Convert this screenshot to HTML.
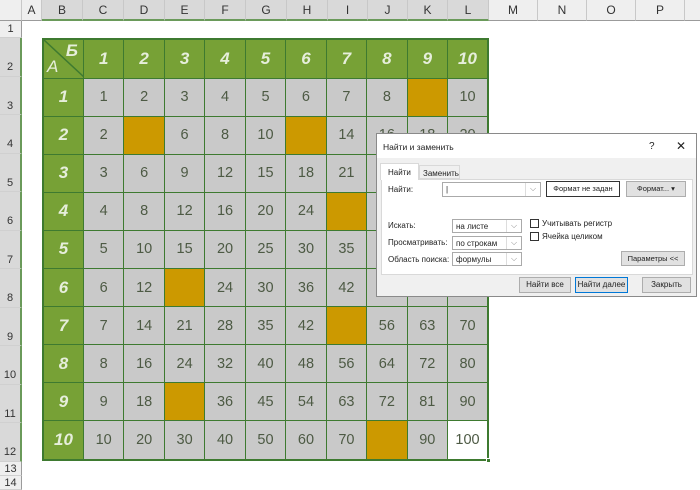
<!DOCTYPE html><html><head><meta charset="utf-8"><style>
*{margin:0;padding:0;box-sizing:border-box}
body{width:700px;height:488px;overflow:hidden;background:#fff;font-family:"Liberation Sans",Arial,sans-serif;position:relative}
.ch{position:absolute;top:0;height:21px;border-right:1px solid #c8c8c8;border-bottom:1px solid #9b9b9b;background:#efefef;font-size:12px;color:#333;text-align:center;line-height:21px}
.ch.s{background:#d9d9d9;border-bottom:2px solid #6a9a5a}
.rh{position:absolute;left:0;width:22px;border-bottom:1px solid #d0d0d0;border-right:1px solid #9b9b9b;background:#efefef;font-size:11px;color:#333;text-align:center}
.rh.s{background:#d9d9d9;border-right:2px solid #6a9a5a}
table{position:absolute;left:42px;top:38px;width:447px;height:423px;table-layout:fixed;border-collapse:collapse;border:2px solid #3e7a30}
td{border:1.5px solid #3e7a30;background:#c9c9c9;color:#4d5a44;font-size:14.5px;text-align:center;padding:0;overflow:hidden}
td.h{background:#77a136;color:#e6eedb;font-weight:bold;font-style:italic;font-size:17px}
td.o{background:#cc9900}
td.w{background:#fff}
.dlg{position:absolute;left:376px;top:133px;width:321px;height:164px;background:#f0f0f0;border:1px solid #8a8a8a;font-size:8px;color:#222}
.dlg div{position:absolute;white-space:nowrap}
.btn{background:#e1e1e1;border:1px solid #adadad;text-align:center;line-height:14px}
.cb{background:#fff;border:1px solid #aaa;padding-left:3px;line-height:13px}
.cb:after{content:"⌵";position:absolute;right:0;top:0;width:14px;height:100%;border-left:1px solid #ddd;text-align:center;color:#888;font-size:8px;line-height:11px}
</style></head><body>
<div class="ch" style="left:0;width:22px"></div>
<div class="ch" style="left:22px;width:20px">A</div>
<div class="ch s" style="left:42px;width:41px">B</div>
<div class="ch s" style="left:83px;width:41px">C</div>
<div class="ch s" style="left:124px;width:41px">D</div>
<div class="ch s" style="left:165px;width:40px">E</div>
<div class="ch s" style="left:205px;width:41px">F</div>
<div class="ch s" style="left:246px;width:41px">G</div>
<div class="ch s" style="left:287px;width:41px">H</div>
<div class="ch s" style="left:328px;width:40px">I</div>
<div class="ch s" style="left:368px;width:40px">J</div>
<div class="ch s" style="left:408px;width:40px">K</div>
<div class="ch s" style="left:448px;width:41px">L</div>
<div class="ch" style="left:489px;width:49px">M</div>
<div class="ch" style="left:538px;width:49px">N</div>
<div class="ch" style="left:587px;width:49px">O</div>
<div class="ch" style="left:636px;width:49px">P</div>
<div class="ch" style="left:685px;width:20px"></div>
<div class="rh" style="top:21px;height:17px;line-height:17px">1</div>
<div class="rh s" style="top:38px;height:38.5px;line-height:58px">2</div>
<div class="rh s" style="top:76.5px;height:38.5px;line-height:58px">3</div>
<div class="rh s" style="top:115px;height:38.5px;line-height:58px">4</div>
<div class="rh s" style="top:153.5px;height:38.5px;line-height:58px">5</div>
<div class="rh s" style="top:192px;height:38.5px;line-height:58px">6</div>
<div class="rh s" style="top:230.5px;height:38.5px;line-height:58px">7</div>
<div class="rh s" style="top:269px;height:38.5px;line-height:58px">8</div>
<div class="rh s" style="top:307.5px;height:38.5px;line-height:58px">9</div>
<div class="rh s" style="top:346px;height:38.5px;line-height:58px">10</div>
<div class="rh s" style="top:384.5px;height:38.5px;line-height:58px">11</div>
<div class="rh s" style="top:423px;height:38.5px;line-height:58px">12</div>
<div class="rh" style="top:461.5px;height:14px;line-height:14px">13</div>
<div class="rh" style="top:475.5px;height:14px;line-height:14px">14</div>
<table>
<tr><td class="h" style="position:relative"><svg width="41" height="38" style="position:absolute;left:0;top:0"><line x1="0" y1="0" x2="41" y2="38" stroke="#3e7a30" stroke-width="1.5"/></svg><span style="position:absolute;right:5px;top:1px">Б</span><span style="position:absolute;left:3px;bottom:1px;font-weight:normal">А</span></td><td class="h">1</td><td class="h">2</td><td class="h">3</td><td class="h">4</td><td class="h">5</td><td class="h">6</td><td class="h">7</td><td class="h">8</td><td class="h">9</td><td class="h">10</td></tr>
<tr><td class="h">1</td><td>1</td><td>2</td><td>3</td><td>4</td><td>5</td><td>6</td><td>7</td><td>8</td><td class="o"></td><td>10</td></tr>
<tr><td class="h">2</td><td>2</td><td class="o"></td><td>6</td><td>8</td><td>10</td><td class="o"></td><td>14</td><td>16</td><td>18</td><td>20</td></tr>
<tr><td class="h">3</td><td>3</td><td>6</td><td>9</td><td>12</td><td>15</td><td>18</td><td>21</td><td>24</td><td>27</td><td>30</td></tr>
<tr><td class="h">4</td><td>4</td><td>8</td><td>12</td><td>16</td><td>20</td><td>24</td><td class="o"></td><td>32</td><td>36</td><td>40</td></tr>
<tr><td class="h">5</td><td>5</td><td>10</td><td>15</td><td>20</td><td>25</td><td>30</td><td>35</td><td>40</td><td>45</td><td>50</td></tr>
<tr><td class="h">6</td><td>6</td><td>12</td><td class="o"></td><td>24</td><td>30</td><td>36</td><td>42</td><td>48</td><td>54</td><td>60</td></tr>
<tr><td class="h">7</td><td>7</td><td>14</td><td>21</td><td>28</td><td>35</td><td>42</td><td class="o"></td><td>56</td><td>63</td><td>70</td></tr>
<tr><td class="h">8</td><td>8</td><td>16</td><td>24</td><td>32</td><td>40</td><td>48</td><td>56</td><td>64</td><td>72</td><td>80</td></tr>
<tr><td class="h">9</td><td>9</td><td>18</td><td class="o"></td><td>36</td><td>45</td><td>54</td><td>63</td><td>72</td><td>81</td><td>90</td></tr>
<tr><td class="h">10</td><td>10</td><td>20</td><td>30</td><td>40</td><td>50</td><td>60</td><td>70</td><td class="o"></td><td>90</td><td class="w">100</td></tr>
</table>
<div class="dlg">
<div style="left:0;top:0;width:319px;height:24px;background:#fff"></div>
<div style="left:6px;top:8px;font-size:8.5px">Найти и заменить</div>
<div style="left:272px;top:7px;font-size:10px">?</div>
<div style="left:299px;top:5px;font-size:12px">✕</div>
<div style="left:4px;top:45px;width:312px;height:96px;background:#fff;border:1px solid #d9d9d9"></div>
<div style="left:3px;top:29px;width:39px;height:17px;background:#fff;border:1px solid #d9d9d9;border-bottom:none;padding:4px 0 0 7px">Найти</div>
<div style="left:42px;top:31px;width:41px;height:14px;background:#f0f0f0;border:1px solid #d9d9d9;padding:3px 0 0 3px">Заменить</div>
<div style="left:11px;top:51px">Найти:</div>
<div class="cb" style="left:65px;top:48px;width:99px;height:15px">|</div>
<div style="left:169px;top:47px;width:74px;height:16px;background:#fff;border:1px solid #333;text-align:center;line-height:14px;font-size:7.5px">Формат не задан</div>
<div class="btn" style="left:249px;top:47px;width:60px;height:16px;font-size:7.5px">Формат... ▾</div>
<div style="left:11px;top:87px">Искать:</div>
<div class="cb" style="left:75px;top:85px;width:70px;height:14px">на листе</div>
<div style="left:11px;top:104px">Просматривать:</div>
<div class="cb" style="left:75px;top:102px;width:70px;height:14px">по строкам</div>
<div style="left:11px;top:121px">Область поиска:</div>
<div class="cb" style="left:75px;top:118px;width:70px;height:14px">формулы</div>
<div style="left:153px;top:85px;width:9px;height:9px;border:1px solid #333;background:#fff"></div>
<div style="left:165px;top:85px">Учитывать регистр</div>
<div style="left:153px;top:98px;width:9px;height:9px;border:1px solid #333;background:#fff"></div>
<div style="left:165px;top:98px">Ячейка целиком</div>
<div class="btn" style="left:244px;top:117px;width:64px;height:15px;font-size:7.5px">Параметры &lt;&lt;</div>
<div class="btn" style="left:142px;top:143px;width:52px;height:16px">Найти все</div>
<div class="btn" style="left:198px;top:143px;width:53px;height:16px;border:1px solid #0078d7">Найти далее</div>
<div class="btn" style="left:265px;top:143px;width:49px;height:16px">Закрыть</div>
</div>
<div style="position:absolute;left:486px;top:458px;width:5px;height:5px;background:#3e7a30;border:1px solid #fff"></div>
</body></html>
